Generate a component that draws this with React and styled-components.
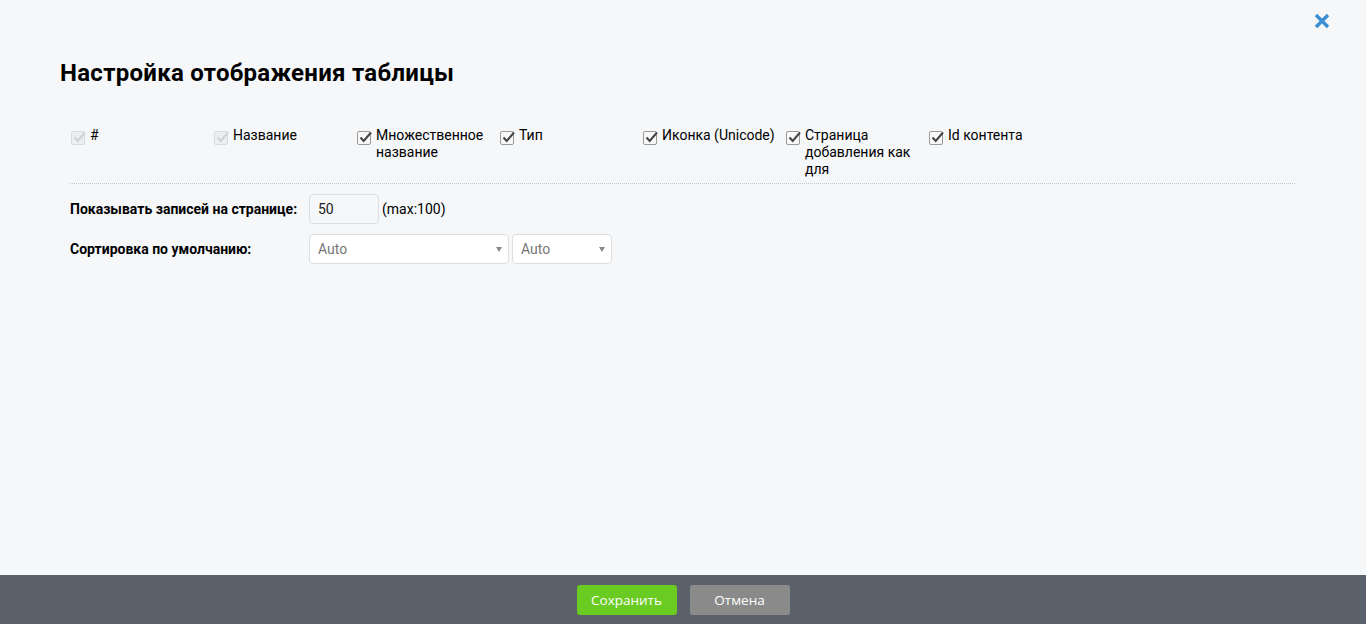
import React from 'react'
import styled, { createGlobalStyle } from 'styled-components'

const GlobalStyle = createGlobalStyle`
  html, body {
    margin: 0;
    padding: 0;
    height: 100%;
    background: #f5f7f9;
  }
  #root {
    height: 100%;
  }
`

const Page = styled.div`
  height: 624px;
  display: flex;
  flex-direction: column;
  font-family: Roboto, "Liberation Sans", sans-serif;
  color: #111;
  background: #f5f7f9;
`

const Body = styled.div`
  flex: 1;
  position: relative;
  padding: 57px 61px 0 60px;
`

const Close = styled.button`
  position: absolute;
  top: 12px;
  right: 35px;
  width: 18px;
  height: 18px;
  padding: 0;
  border: 0;
  background: none;
  cursor: pointer;
`

const Title = styled.h1`
  margin: 0;
  font-size: 24px;
  line-height: 32px;
  font-weight: 700;
  letter-spacing: 0.28px;
  color: #000;
`

const Content = styled.div`
  padding: 0 10px;
`

const Columns = styled.div`
  display: flex;
  margin-top: 38px;
  padding-bottom: 5px;
  border-bottom: 1px dotted #c4c8cc;
`

const Column = styled.label`
  width: 143px;
  display: flex;
  align-items: flex-start;
  font-size: 14px;
  line-height: 17px;
  min-height: 50px;
  color: #000;
`

const Box = styled.span`
  flex: none;
  width: 12px;
  height: 12px;
  margin: 4px 5px 0 1px;
  border: 1px solid ${(p) => (p.disabled ? '#d9dbdd' : '#9a9a9a')};
  border-radius: 2px;
  background: ${(p) => (p.disabled ? '#eceeef' : '#f8f8f8')};
  position: relative;
  svg {
    position: absolute;
    left: 1px;
    top: -1px;
  }
`

const ColText = styled.span`
  padding-right: 8px;
`

const Row = styled.div`
  display: flex;
  align-items: center;
  margin-top: ${(p) => p.top}px;
  gap: 3px;
`

const Label = styled.div`
  width: 236px;
  font-size: 14px;
  font-weight: 700;
  color: #000;
`

const Input = styled.div`
  box-sizing: border-box;
  width: 70px;
  height: 30px;
  border: 1px solid #dcdfe2;
  border-radius: 4px;
  background: #f6f7f8;
  font-size: 14px;
  line-height: 28px;
  padding-left: 8px;
  color: #222;
`

const Hint = styled.span`
  font-size: 14px;
  color: #000;
`

const Select = styled.div`
  box-sizing: border-box;
  width: ${(p) => p.w}px;
  height: 30px;
  border: 1px solid #dcdfe2;
  border-radius: 4px;
  background: #fff;
  display: flex;
  align-items: center;
  justify-content: space-between;
  padding: 0 6px 0 8px;
  font-size: 14px;
  color: #777;
`

const Arrow = styled.span`
  width: 0;
  height: 0;
  border-left: 3px solid transparent;
  border-right: 3px solid transparent;
  border-top: 5px solid #888;
`

const Footer = styled.div`
  height: 49px;
  background: #5b616b;
  display: flex;
  justify-content: center;
  align-items: center;
  gap: 13px;
`

const Button = styled.button`
  width: 100px;
  height: 30px;
  border: 0;
  border-radius: 3px;
  background: ${(p) => (p.primary ? '#6acb22' : '#8a8a8a')};
  color: #fff;
  font-family: "Open Sans", "Noto Sans", sans-serif;
  font-size: 13.5px;
  cursor: pointer;
`

const Check = ({ disabled }) => (
  <Box disabled={disabled}>
    <svg width="13" height="12" viewBox="0 0 13 12">
      <path
        d="M1.5 6.5 L4.7 10 L12 1.5"
        fill="none"
        stroke={disabled ? '#cfd2d4' : '#444'}
        strokeWidth="2"
      />
    </svg>
  </Box>
)

const columns = [
  { name: '#', disabled: true },
  { name: 'Название', disabled: true },
  { name: 'Множественное название' },
  { name: 'Тип' },
  { name: 'Иконка (Unicode)' },
  { name: 'Страница добавления как для' },
  { name: 'Id контента' },
]

export default function App() {
  return (
    <>
      <GlobalStyle />
      <Page>
        <Body>
          <Close aria-label="close">
            <svg width="18" height="18" viewBox="0 0 18 18">
              <path d="M3 3 L15 15 M15 3 L3 15" stroke="#3a8fd2" strokeWidth="3.4" />
            </svg>
          </Close>
          <Title>Настройка отображения таблицы</Title>
          <Content>
            <Columns>
              {columns.map((c) => (
                <Column key={c.name}>
                  <Check disabled={c.disabled} />
                  <ColText>{c.name}</ColText>
                </Column>
              ))}
            </Columns>
            <Row top={10}>
              <Label>Показывать записей на странице:</Label>
              <Input>50</Input>
              <Hint>(max:100)</Hint>
            </Row>
            <Row top={10}>
              <Label>Сортировка по умолчанию:</Label>
              <Select w={200}>
                Auto
                <Arrow />
              </Select>
              <Select w={100}>
                Auto
                <Arrow />
              </Select>
            </Row>
          </Content>
        </Body>
        <Footer>
          <Button primary>Сохранить</Button>
          <Button>Отмена</Button>
        </Footer>
      </Page>
    </>
  )
}
